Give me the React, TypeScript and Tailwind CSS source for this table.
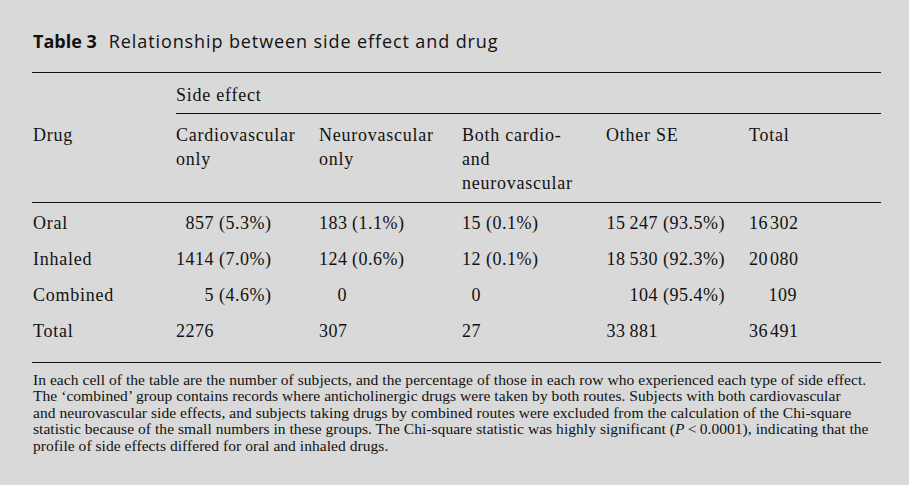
import React from 'react';

type Cell = { n: string; pct?: string };

interface Row {
  drug: string;
  cells: Cell[];
}

const rows: Row[] = [
  {
    drug: 'Oral',
    cells: [
      { n: '857', pct: '(5.3%)' },
      { n: '183', pct: '(1.1%)' },
      { n: '15', pct: '(0.1%)' },
      { n: '15\u2009247', pct: '(93.5%)' },
      { n: '16\u200A302' },
    ],
  },
  {
    drug: 'Inhaled',
    cells: [
      { n: '1414', pct: '(7.0%)' },
      { n: '124', pct: '(0.6%)' },
      { n: '12', pct: '(0.1%)' },
      { n: '18\u2009530', pct: '(92.3%)' },
      { n: '20\u200A080' },
    ],
  },
  {
    drug: 'Combined',
    cells: [
      { n: '5', pct: '(4.6%)' },
      { n: '0' },
      { n: '0' },
      { n: '104', pct: '(95.4%)' },
      { n: '109' },
    ],
  },
  {
    drug: 'Total',
    cells: [
      { n: '2276' },
      { n: '307' },
      { n: '27' },
      { n: '33\u2009881' },
      { n: '36\u200A491' },
    ],
  },
];

// width of the number part in each column, so digits line up
const numWidths = ['w-[38px]', 'w-[28px]', 'w-[19px]', 'w-[52px]', 'w-[48px]'];

const Rule = ({ className = '' }: { className?: string }) => (
  <div className={`h-px bg-[#111] ${className}`}></div>
);

const App: React.FC = () => {
  return (
    <div className="w-[909px] h-[485px] bg-[#d9d9d9] text-[#111] overflow-hidden">
      <div className="w-[849px] ml-[32px] pt-[29px]">
        <h1 className="font-['Open_Sans',sans-serif] text-[18px] leading-[24px] pl-px">
          <span className="font-bold">Table 3</span>
          <span className="ml-[12px] tracking-[0.9px]">Relationship between side effect and drug</span>
        </h1>

        <Rule className="mt-[19px]" />

        <div className="font-['Liberation_Serif',serif] text-[18px] tracking-[0.75px] leading-[24px]">
          <div className="grid grid-cols-[144px_143px_143px_144px_143px_1fr]">
            <div className="col-start-2 col-span-5 pt-[10px] pb-[6px]">Side effect</div>
            <div className="col-start-2 col-span-5">
              <Rule />
            </div>
          </div>

          <div className="grid grid-cols-[144px_143px_143px_144px_143px_1fr] pt-[9px] pb-[7px]">
            <div className="pl-px">Drug</div>
            <div>Cardiovascular<br />only</div>
            <div>Neurovascular<br />only</div>
            <div>Both cardio-<br />and<br />neurovascular</div>
            <div>Other SE</div>
            <div>Total</div>
          </div>

          <Rule />

          <div className="pt-[2px] pb-[13px] tracking-[0.5px]">
            {rows.map((r) => (
              <div key={r.drug} className="grid grid-cols-[144px_143px_143px_144px_143px_1fr] leading-[36px]">
                <div className="pl-px tracking-[0.75px]">{r.drug}</div>
                {r.cells.map((c, i) => (
                  <div key={i} className="whitespace-nowrap">
                    <span className={`inline-block text-right ${numWidths[i]}`}>{c.n}</span>
                    {c.pct && <span> {c.pct}</span>}
                  </div>
                ))}
              </div>
            ))}
          </div>

          <Rule />
        </div>

        <p className="font-['Liberation_Serif',serif] text-[15.5px] leading-[16.4px] tracking-[0.05px] pt-[9px] pl-px whitespace-nowrap">
          In each cell of the table are the number of subjects, and the percentage of those in each row who experienced each type of side effect.
          <br />
          The ‘combined’ group contains records where anticholinergic drugs were taken by both routes. Subjects with both cardiovascular
          <br />
          and neurovascular side effects, and subjects taking drugs by combined routes were excluded from the calculation of the Chi-square
          <br />
          statistic because of the small numbers in these groups. The Chi-square statistic was highly significant (<i>P</i>&thinsp;&lt;&thinsp;0.0001), indicating that the
          <br />
          profile of side effects differed for oral and inhaled drugs.
        </p>
      </div>
    </div>
  );
};

export default App;
